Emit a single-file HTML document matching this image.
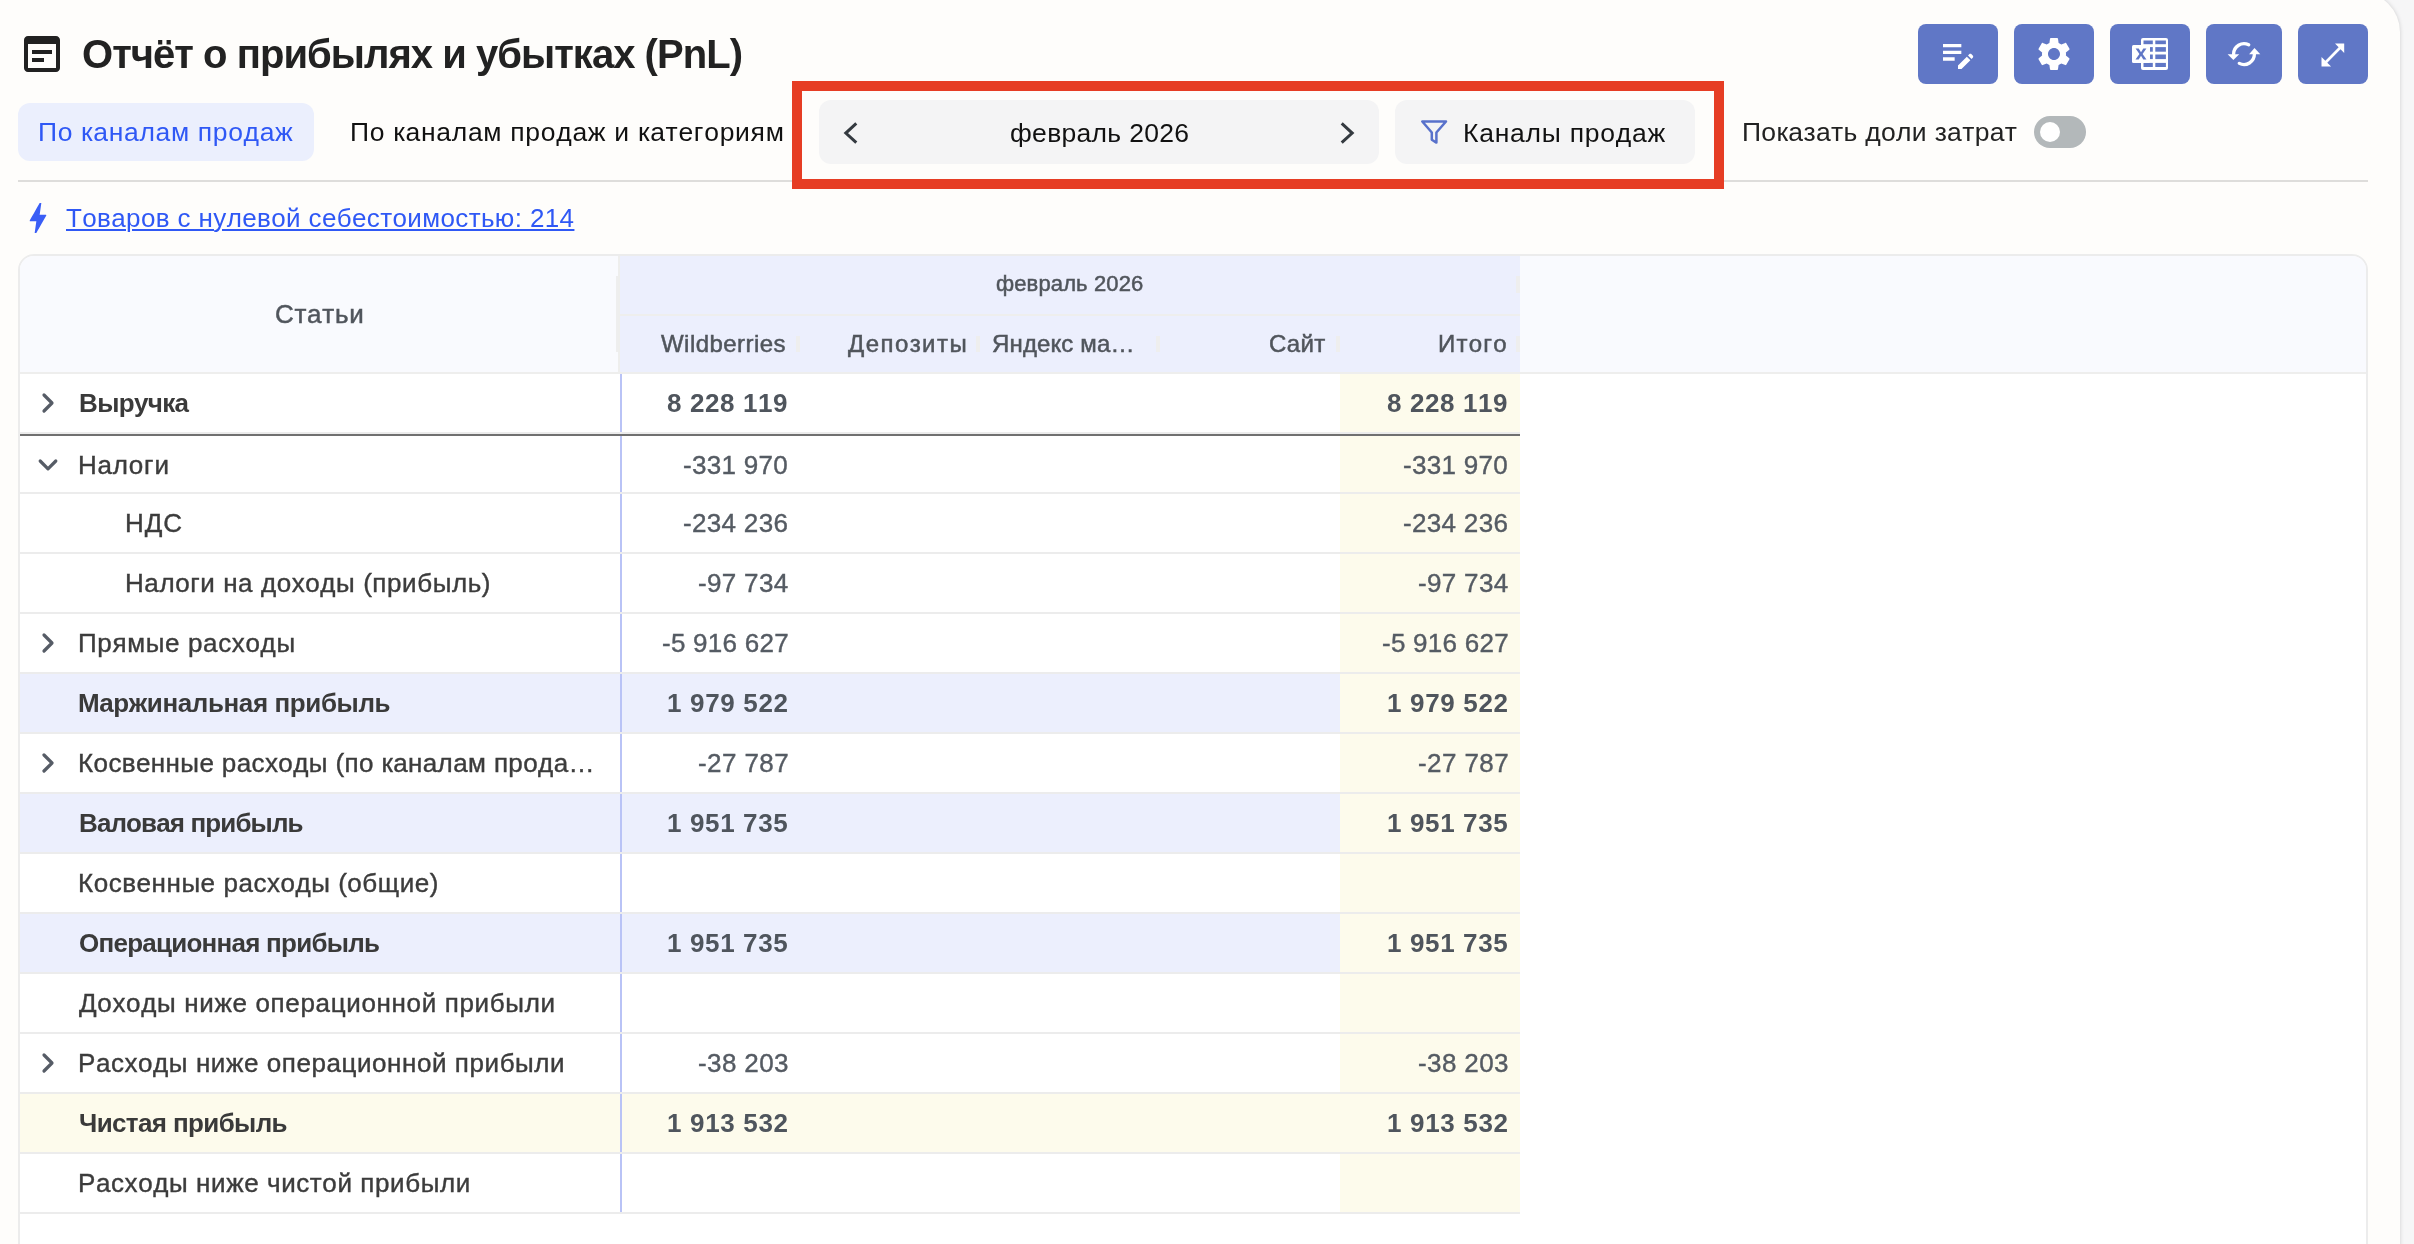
<!DOCTYPE html>
<html lang="ru"><head><meta charset="utf-8"><title>PnL</title>
<style>
html,body{margin:0;padding:0;}
body{width:2414px;height:1244px;overflow:hidden;background:#f6f6f7;font-family:"Liberation Sans", sans-serif;position:relative;}
.b{position:absolute;display:block;}
.t{position:absolute;white-space:nowrap;font-family:"Liberation Sans", sans-serif;will-change:transform;font-kerning:none;font-variant-ligatures:none;}
</style></head><body>
<div class="b" style="left:-40px;top:-8px;width:2440px;height:1400px;background:#fefdfb;border-radius:40px;box-shadow:0 0 4px rgba(0,0,0,0.17);"></div>
<svg class="b" style="left:18px;top:30px" width="48" height="48" viewBox="0 0 24 24"><path fill="#212121" d="M19 3H5c-1.11 0-2 .9-2 2v14c0 1.1.89 2 2 2h14c1.1 0 2-.9 2-2V5c0-1.1-.9-2-2-2zm0 16H5V7h14v12zm-2-7H7v-2h10v2zm-4 4H7v-2h6v2z"/></svg>
<span class="t" style="left:82.06px;top:31.79px;font-size:40px;line-height:44.688px;color:#222;letter-spacing:-0.963px;font-weight:700;">Отчёт о прибылях и убытках (PnL)</span>
<div class="b" style="left:1918px;top:24px;width:80px;height:60px;background:#6077c6;border-radius:8px;"></div>
<div class="b" style="left:2014px;top:24px;width:80px;height:60px;background:#6077c6;border-radius:8px;"></div>
<div class="b" style="left:2110px;top:24px;width:80px;height:60px;background:#6077c6;border-radius:8px;"></div>
<div class="b" style="left:2206px;top:24px;width:76px;height:60px;background:#6077c6;border-radius:8px;"></div>
<div class="b" style="left:2298px;top:24px;width:70px;height:60px;background:#6077c6;border-radius:8px;"></div>
<svg class="b" style="left:1938px;top:34px" width="40" height="40" viewBox="0 0 24 24"><path fill="#fff" d="M3 10h11v2H3v-2zm0-2h11V6H3v2zm0 8h7v-2H3v2zm15.01-3.13.71-.71c.39-.39 1.02-.39 1.41 0l.71.71c.39.39.39 1.02 0 1.41l-.71.71-2.12-2.12zm-.71.71-5.3 5.3V21h2.12l5.3-5.3-2.12-2.12z"/></svg>
<svg class="b" style="left:2034px;top:34px" width="40" height="40" viewBox="0 0 24 24"><path fill="#fff" d="M19.14 12.94c.04-.3.06-.61.06-.94 0-.32-.02-.64-.07-.94l2.03-1.58c.18-.14.23-.41.12-.61l-1.92-3.32c-.12-.22-.37-.29-.59-.22l-2.39.96c-.5-.38-1.03-.7-1.62-.94l-.36-2.54c-.04-.24-.24-.41-.48-.41h-3.84c-.24 0-.43.17-.47.41l-.36 2.54c-.59.24-1.13.57-1.62.94l-2.39-.96c-.22-.08-.47 0-.59.22L2.74 8.87c-.12.21-.08.47.12.61l2.03 1.58c-.05.3-.09.63-.09.94s.02.64.07.94l-2.03 1.58c-.18.14-.23.41-.12.61l1.92 3.32c.12.22.37.29.59.22l2.39-.96c.5.38 1.03.7 1.62.94l.36 2.54c.05.24.24.41.48.41h3.84c.24 0 .44-.17.47-.41l.36-2.54c.59-.24 1.13-.56 1.62-.94l2.39.96c.22.08.47 0 .59-.22l1.92-3.32c.12-.22.07-.47-.12-.61l-2.01-1.58zM12 15.6c-1.98 0-3.600-1.62-3.600-3.600s1.620-3.600 3.600-3.600 3.600 1.620 3.600 3.600-1.620 3.600-3.600 3.600z"/></svg>
<svg class="b" style="left:2132px;top:38px" width="36" height="32" viewBox="0 0 36 32">
<rect x="9" y="0" width="27" height="32" rx="2" fill="#fff"/>
<g fill="#6077c6"><rect x="11.500" y="2.500" width="9.300" height="3.700"/><rect x="23.300" y="2.500" width="10.600" height="3.700"/>
<rect x="23.300" y="9.100" width="10.600" height="4.600"/><rect x="23.300" y="16.500" width="10.600" height="4.600"/>
<rect x="18" y="9.100" width="2.800" height="4.600"/><rect x="18" y="16.500" width="2.800" height="4.600"/>
<rect x="11.500" y="24.900" width="9.300" height="4.100"/><rect x="23.300" y="24.900" width="10.600" height="4.100"/></g>
<rect x="0" y="7" width="18" height="18" rx="1.500" fill="#fff"/>
<path fill="#6077c6" d="M3.600 10.500h3.100l2.300 3.700 2.300-3.700h3.100l-3.800 5.500 3.900 5.500h-3.200l-2.300-3.700-2.300 3.700h-3.200l3.900-5.500z"/>
</svg>
<svg class="b" style="left:2220px;top:36px" width="48" height="36" viewBox="0 0 48 36">
<g fill="none" stroke="#fff" stroke-width="3.300" stroke-linecap="round"><path d="M13.600 18.100 A10.400 10.400 0 0 1 28.720 8.830"/><path d="M34.400 18.100 A10.400 10.400 0 0 1 19.280 27.370"/></g>
<path fill="#fff" d="M7.600 18.300h11.600l-5.800 5.700z"/><path fill="#fff" d="M29.100 18.200h11.200l-5.800-6.200z"/>
</svg>
<svg class="b" style="left:2321px;top:43px" width="24" height="24" viewBox="0 0 24 24">
<path fill="#fff" d="M23.200 0.400H14L17.650 4.250L4.350 17.750L0.500 13.900V23.500H10.100L6.250 19.650L19.550 6.150L23.200 10Z"/>
</svg>
<div class="b" style="left:18px;top:103px;width:296px;height:58px;background:#ebeffd;border-radius:12px;"></div>
<span class="t" style="left:37.75px;top:117.61px;font-size:26.5px;line-height:29.605px;color:#2f58f5;letter-spacing:0.647px;">По каналам продаж</span>
<span class="t" style="left:349.55px;top:117.61px;font-size:26.5px;line-height:29.605px;color:#111;letter-spacing:0.698px;">По каналам продаж и категориям</span>
<div class="b" style="left:18px;top:180px;width:2350px;height:2px;background:#dedddb;"></div>
<div class="b" style="left:792px;top:81px;width:932px;height:108px;background:transparent;box-sizing:border-box;border:10px solid #e63d24;"></div>
<div class="b" style="left:819px;top:100px;width:560px;height:64px;background:#f4f4f5;border-radius:12px;"></div>
<svg class="b" style="left:840px;top:118px" width="24" height="30" viewBox="0 0 24 30"><path d="M16.300 5.400 L5.800 15.050 L16.300 24.700" fill="none" stroke="#343a40" stroke-width="3"/></svg>
<svg class="b" style="left:1334px;top:118px" width="24" height="30" viewBox="0 0 24 30"><path d="M7.700 5.400 L18.200 15.050 L7.700 24.700" fill="none" stroke="#343a40" stroke-width="3"/></svg>
<span class="t" style="left:1009.89px;top:118.61px;font-size:26.5px;line-height:29.605px;color:#111;letter-spacing:0.300px;">февраль 2026</span>
<div class="b" style="left:1395px;top:100px;width:300px;height:64px;background:#f4f4f5;border-radius:12px;"></div>
<svg class="b" style="left:1410px;top:108px" width="50" height="50" viewBox="0 0 50 50"><path d="M12.300 13.500 H36 L26.400 24.500 V34.600 L21.800 31.800 V24.500 Z" fill="none" stroke="#5871cb" stroke-width="2.500" stroke-linejoin="round"/></svg>
<span class="t" style="left:1463.13px;top:118.51px;font-size:26.5px;line-height:29.605px;color:#111;letter-spacing:0.758px;">Каналы продаж</span>
<span class="t" style="left:1741.85px;top:117.51px;font-size:26.5px;line-height:29.605px;color:#222;letter-spacing:0.322px;">Показать доли затрат</span>
<div class="b" style="left:2034px;top:116px;width:52px;height:32px;background:#b3b8ba;border-radius:16px;"></div>
<div class="b" style="left:2040px;top:122px;width:20px;height:20px;background:#fff;border-radius:10px;"></div>
<svg class="b" style="left:18px;top:198px" width="40" height="40" viewBox="0 0 24 24"><path fill="#3a5ef6" d="M11 21h-1l1-7H7.500c-.58 0-.57-.32-.38-.66.190-.34.050-.08.070-.12C8.480 10.940 10.420 7.540 13 3h1l-1 7h3.500c.49 0 .56.330.47.510l-.07.150C12.960 17.550 11 21 11 21z"/></svg>
<span class="t" style="left:65.72px;top:203.66px;font-size:26px;line-height:29.047px;color:#2f58f5;letter-spacing:0.373px;text-decoration:underline;text-decoration-thickness:2px;text-underline-offset:2px;text-decoration-skip-ink:auto;">Товаров с нулевой себестоимостью: 214</span>
<div class="b" style="left:18px;top:254px;width:2350px;height:1100px;box-sizing:border-box;border:2px solid #ececec;border-radius:16px;background:#fff;overflow:hidden"></div>
<div class="b" style="left:20px;top:256px;width:2346px;height:116px;background:#f9fafe;border-radius:14px 14px 0 0;"></div>
<div class="b" style="left:618px;top:256px;width:2px;height:116px;background:#eeeeed;"></div>
<div class="b" style="left:620px;top:256px;width:900px;height:116px;background:#eceffd;"></div>
<div class="b" style="left:620px;top:314px;width:900px;height:2px;background:#eeeeed;"></div>
<div class="b" style="left:20px;top:372px;width:2346px;height:2px;background:#eeeeed;"></div>
<div class="b" style="left:616px;top:276px;width:2px;height:76px;background:#eeeeee;"></div>
<div class="b" style="left:1516px;top:276px;width:4px;height:17px;background:#eeeeee;"></div>
<div class="b" style="left:796px;top:336px;width:4px;height:16px;background:#eeeeee;"></div>
<div class="b" style="left:976px;top:336px;width:4px;height:16px;background:#eeeeee;"></div>
<div class="b" style="left:1156px;top:336px;width:4px;height:16px;background:#eeeeee;"></div>
<div class="b" style="left:1336px;top:336px;width:4px;height:16px;background:#eeeeee;"></div>
<div class="b" style="left:1516px;top:336px;width:4px;height:16px;background:#eeeeee;"></div>
<span class="t" style="left:275.08px;top:299.66px;font-size:26px;line-height:29.047px;color:#50555c;letter-spacing:0.720px;-webkit-text-stroke:0.5px #50555c;">Статьи</span>
<span class="t" style="left:995.88px;top:271.58px;font-size:22px;line-height:24.578px;color:#50555c;letter-spacing:0.131px;-webkit-text-stroke:0.5px #50555c;">февраль 2026</span>
<span class="t" style="left:661.29px;top:330.67px;font-size:24px;line-height:26.812px;color:#50555c;letter-spacing:0.455px;-webkit-text-stroke:0.5px #50555c;">Wildberries</span>
<span class="t" style="left:847.52px;top:330.67px;font-size:24px;line-height:26.812px;color:#50555c;letter-spacing:1.435px;-webkit-text-stroke:0.5px #50555c;">Депозиты</span>
<span class="t" style="left:992.38px;top:330.67px;font-size:24px;line-height:26.812px;color:#50555c;letter-spacing:0.159px;-webkit-text-stroke:0.5px #50555c;">Яндекс ма…</span>
<span class="t" style="left:1269.08px;top:330.67px;font-size:24px;line-height:26.812px;color:#50555c;letter-spacing:0.417px;-webkit-text-stroke:0.5px #50555c;">Сайт</span>
<span class="t" style="left:1437.73px;top:330.67px;font-size:24px;line-height:26.812px;color:#50555c;letter-spacing:1.196px;-webkit-text-stroke:0.5px #50555c;">Итого</span>
<div class="b" style="left:1340px;top:374px;width:180px;height:58px;background:#fdfbec;"></div>
<div class="b" style="left:620px;top:374px;width:2px;height:58px;background:#b9c3f6;"></div>
<div class="b" style="left:20px;top:432px;width:1500px;height:2px;background:#ececec;"></div>
<span class="t" style="left:78.56px;top:388.96px;font-size:26px;line-height:29.047px;color:#3a3a3a;letter-spacing:-0.636px;font-weight:700;">Выручка</span>
<svg class="b" style="left:36px;top:388px" width="24" height="30" viewBox="0 0 24 30"><path d="M8 7 L16 15 L8 23" fill="none" stroke="#565c66" stroke-width="3.200" stroke-linecap="round" stroke-linejoin="round"/></svg>
<span class="t" style="left:667.47px;top:388.96px;font-size:26px;line-height:29.047px;color:#4f555d;letter-spacing:0.603px;font-weight:700;">8 228 119</span>
<span class="t" style="left:1387.47px;top:388.96px;font-size:26px;line-height:29.047px;color:#4f555d;letter-spacing:0.603px;font-weight:700;">8 228 119</span>
<div class="b" style="left:1340px;top:434px;width:180px;height:58px;background:#fdfbec;"></div>
<div class="b" style="left:620px;top:434px;width:2px;height:58px;background:#b9c3f6;"></div>
<div class="b" style="left:20px;top:492px;width:1500px;height:2px;background:#ececec;"></div>
<span class="t" style="left:78.37px;top:450.96px;font-size:26px;line-height:29.047px;color:#3c3c3c;letter-spacing:0.812px;-webkit-text-stroke:0.4px #3c3c3c;">Налоги</span>
<svg class="b" style="left:33px;top:451px" width="30" height="24" viewBox="0 0 30 24"><path d="M7.200 10 L15 17.800 L22.800 10" fill="none" stroke="#565c66" stroke-width="3.200" stroke-linecap="round" stroke-linejoin="round"/></svg>
<span class="t" style="left:683.24px;top:450.96px;font-size:26px;line-height:29.047px;color:#555b63;letter-spacing:0.304px;-webkit-text-stroke:0.4px #555b63;">-331 970</span>
<span class="t" style="left:1403.24px;top:450.96px;font-size:26px;line-height:29.047px;color:#555b63;letter-spacing:0.304px;-webkit-text-stroke:0.4px #555b63;">-331 970</span>
<div class="b" style="left:1340px;top:494px;width:180px;height:58px;background:#fdfbec;"></div>
<div class="b" style="left:620px;top:494px;width:2px;height:58px;background:#b9c3f6;"></div>
<div class="b" style="left:20px;top:552px;width:1500px;height:2px;background:#ececec;"></div>
<span class="t" style="left:124.77px;top:508.96px;font-size:26px;line-height:29.047px;color:#3c3c3c;letter-spacing:0.931px;-webkit-text-stroke:0.4px #3c3c3c;">НДС</span>
<span class="t" style="left:683.24px;top:508.96px;font-size:26px;line-height:29.047px;color:#555b63;letter-spacing:0.322px;-webkit-text-stroke:0.4px #555b63;">-234 236</span>
<span class="t" style="left:1403.24px;top:508.96px;font-size:26px;line-height:29.047px;color:#555b63;letter-spacing:0.322px;-webkit-text-stroke:0.4px #555b63;">-234 236</span>
<div class="b" style="left:1340px;top:554px;width:180px;height:58px;background:#fdfbec;"></div>
<div class="b" style="left:620px;top:554px;width:2px;height:58px;background:#b9c3f6;"></div>
<div class="b" style="left:20px;top:612px;width:1500px;height:2px;background:#ececec;"></div>
<span class="t" style="left:124.77px;top:568.96px;font-size:26px;line-height:29.047px;color:#3c3c3c;letter-spacing:0.578px;-webkit-text-stroke:0.4px #3c3c3c;">Налоги на доходы (прибыль)</span>
<span class="t" style="left:697.64px;top:568.96px;font-size:26px;line-height:29.047px;color:#555b63;letter-spacing:0.323px;-webkit-text-stroke:0.4px #555b63;">-97 734</span>
<span class="t" style="left:1417.64px;top:568.96px;font-size:26px;line-height:29.047px;color:#555b63;letter-spacing:0.323px;-webkit-text-stroke:0.4px #555b63;">-97 734</span>
<div class="b" style="left:1340px;top:614px;width:180px;height:58px;background:#fdfbec;"></div>
<div class="b" style="left:620px;top:614px;width:2px;height:58px;background:#b9c3f6;"></div>
<div class="b" style="left:20px;top:672px;width:1500px;height:2px;background:#ececec;"></div>
<span class="t" style="left:78.09px;top:628.96px;font-size:26px;line-height:29.047px;color:#3c3c3c;letter-spacing:0.646px;-webkit-text-stroke:0.4px #3c3c3c;">Прямые расходы</span>
<svg class="b" style="left:36px;top:628px" width="24" height="30" viewBox="0 0 24 30"><path d="M8 7 L16 15 L8 23" fill="none" stroke="#565c66" stroke-width="3.200" stroke-linecap="round" stroke-linejoin="round"/></svg>
<span class="t" style="left:661.64px;top:628.96px;font-size:26px;line-height:29.047px;color:#555b63;letter-spacing:0.260px;-webkit-text-stroke:0.4px #555b63;">-5 916 627</span>
<span class="t" style="left:1381.64px;top:628.96px;font-size:26px;line-height:29.047px;color:#555b63;letter-spacing:0.260px;-webkit-text-stroke:0.4px #555b63;">-5 916 627</span>
<div class="b" style="left:20px;top:674px;width:1500px;height:58px;background:#eceffd;"></div>
<div class="b" style="left:1340px;top:674px;width:180px;height:58px;background:#fdfbec;"></div>
<div class="b" style="left:620px;top:674px;width:2px;height:58px;background:#b9c3f6;"></div>
<div class="b" style="left:20px;top:732px;width:1500px;height:2px;background:#ececec;"></div>
<span class="t" style="left:78.46px;top:688.96px;font-size:26px;line-height:29.047px;color:#3a3a3a;letter-spacing:-0.392px;font-weight:700;">Маржинальная прибыль</span>
<span class="t" style="left:666.96px;top:688.96px;font-size:26px;line-height:29.047px;color:#4f555d;letter-spacing:0.676px;font-weight:700;">1 979 522</span>
<span class="t" style="left:1386.96px;top:688.96px;font-size:26px;line-height:29.047px;color:#4f555d;letter-spacing:0.676px;font-weight:700;">1 979 522</span>
<div class="b" style="left:1340px;top:734px;width:180px;height:58px;background:#fdfbec;"></div>
<div class="b" style="left:620px;top:734px;width:2px;height:58px;background:#b9c3f6;"></div>
<div class="b" style="left:20px;top:792px;width:1500px;height:2px;background:#ececec;"></div>
<span class="t" style="left:78.27px;top:748.96px;font-size:26px;line-height:29.047px;color:#3c3c3c;letter-spacing:0.389px;-webkit-text-stroke:0.4px #3c3c3c;">Косвенные расходы (по каналам прода…</span>
<svg class="b" style="left:36px;top:748px" width="24" height="30" viewBox="0 0 24 30"><path d="M8 7 L16 15 L8 23" fill="none" stroke="#565c66" stroke-width="3.200" stroke-linecap="round" stroke-linejoin="round"/></svg>
<span class="t" style="left:697.64px;top:748.96px;font-size:26px;line-height:29.047px;color:#555b63;letter-spacing:0.414px;-webkit-text-stroke:0.4px #555b63;">-27 787</span>
<span class="t" style="left:1417.64px;top:748.96px;font-size:26px;line-height:29.047px;color:#555b63;letter-spacing:0.414px;-webkit-text-stroke:0.4px #555b63;">-27 787</span>
<div class="b" style="left:20px;top:794px;width:1500px;height:58px;background:#eceffd;"></div>
<div class="b" style="left:1340px;top:794px;width:180px;height:58px;background:#fdfbec;"></div>
<div class="b" style="left:620px;top:794px;width:2px;height:58px;background:#b9c3f6;"></div>
<div class="b" style="left:20px;top:852px;width:1500px;height:2px;background:#ececec;"></div>
<span class="t" style="left:78.66px;top:808.96px;font-size:26px;line-height:29.047px;color:#3a3a3a;letter-spacing:-0.878px;font-weight:700;">Валовая прибыль</span>
<span class="t" style="left:666.96px;top:808.96px;font-size:26px;line-height:29.047px;color:#4f555d;letter-spacing:0.637px;font-weight:700;">1 951 735</span>
<span class="t" style="left:1386.96px;top:808.96px;font-size:26px;line-height:29.047px;color:#4f555d;letter-spacing:0.637px;font-weight:700;">1 951 735</span>
<div class="b" style="left:1340px;top:854px;width:180px;height:58px;background:#fdfbec;"></div>
<div class="b" style="left:620px;top:854px;width:2px;height:58px;background:#b9c3f6;"></div>
<div class="b" style="left:20px;top:912px;width:1500px;height:2px;background:#ececec;"></div>
<span class="t" style="left:78.27px;top:868.96px;font-size:26px;line-height:29.047px;color:#3c3c3c;letter-spacing:0.541px;-webkit-text-stroke:0.4px #3c3c3c;">Косвенные расходы (общие)</span>
<div class="b" style="left:20px;top:914px;width:1500px;height:58px;background:#eceffd;"></div>
<div class="b" style="left:1340px;top:914px;width:180px;height:58px;background:#fdfbec;"></div>
<div class="b" style="left:620px;top:914px;width:2px;height:58px;background:#b9c3f6;"></div>
<div class="b" style="left:20px;top:972px;width:1500px;height:2px;background:#ececec;"></div>
<span class="t" style="left:79.33px;top:928.96px;font-size:26px;line-height:29.047px;color:#3a3a3a;letter-spacing:-0.749px;font-weight:700;">Операционная прибыль</span>
<span class="t" style="left:666.96px;top:928.96px;font-size:26px;line-height:29.047px;color:#4f555d;letter-spacing:0.637px;font-weight:700;">1 951 735</span>
<span class="t" style="left:1386.96px;top:928.96px;font-size:26px;line-height:29.047px;color:#4f555d;letter-spacing:0.637px;font-weight:700;">1 951 735</span>
<div class="b" style="left:1340px;top:974px;width:180px;height:58px;background:#fdfbec;"></div>
<div class="b" style="left:620px;top:974px;width:2px;height:58px;background:#b9c3f6;"></div>
<div class="b" style="left:20px;top:1032px;width:1500px;height:2px;background:#ececec;"></div>
<span class="t" style="left:79.01px;top:988.96px;font-size:26px;line-height:29.047px;color:#3c3c3c;letter-spacing:0.657px;-webkit-text-stroke:0.4px #3c3c3c;">Доходы ниже операционной прибыли</span>
<div class="b" style="left:1340px;top:1034px;width:180px;height:58px;background:#fdfbec;"></div>
<div class="b" style="left:620px;top:1034px;width:2px;height:58px;background:#b9c3f6;"></div>
<div class="b" style="left:20px;top:1092px;width:1500px;height:2px;background:#ececec;"></div>
<span class="t" style="left:78.27px;top:1048.96px;font-size:26px;line-height:29.047px;color:#3c3c3c;letter-spacing:0.571px;-webkit-text-stroke:0.4px #3c3c3c;">Расходы ниже операционной прибыли</span>
<svg class="b" style="left:36px;top:1048px" width="24" height="30" viewBox="0 0 24 30"><path d="M8 7 L16 15 L8 23" fill="none" stroke="#565c66" stroke-width="3.200" stroke-linecap="round" stroke-linejoin="round"/></svg>
<span class="t" style="left:697.64px;top:1048.96px;font-size:26px;line-height:29.047px;color:#555b63;letter-spacing:0.386px;-webkit-text-stroke:0.4px #555b63;">-38 203</span>
<span class="t" style="left:1417.64px;top:1048.96px;font-size:26px;line-height:29.047px;color:#555b63;letter-spacing:0.386px;-webkit-text-stroke:0.4px #555b63;">-38 203</span>
<div class="b" style="left:20px;top:1094px;width:1500px;height:58px;background:#fdfbec;"></div>
<div class="b" style="left:1340px;top:1094px;width:180px;height:58px;background:#fdfbec;"></div>
<div class="b" style="left:620px;top:1094px;width:2px;height:58px;background:#b9c3f6;"></div>
<div class="b" style="left:20px;top:1152px;width:1500px;height:2px;background:#ececec;"></div>
<span class="t" style="left:79.00px;top:1108.96px;font-size:26px;line-height:29.047px;color:#3a3a3a;letter-spacing:-0.620px;font-weight:700;">Чистая прибыль</span>
<span class="t" style="left:666.96px;top:1108.96px;font-size:26px;line-height:29.047px;color:#4f555d;letter-spacing:0.676px;font-weight:700;">1 913 532</span>
<span class="t" style="left:1386.96px;top:1108.96px;font-size:26px;line-height:29.047px;color:#4f555d;letter-spacing:0.676px;font-weight:700;">1 913 532</span>
<div class="b" style="left:1340px;top:1154px;width:180px;height:58px;background:#fdfbec;"></div>
<div class="b" style="left:620px;top:1154px;width:2px;height:58px;background:#b9c3f6;"></div>
<div class="b" style="left:20px;top:1212px;width:1500px;height:2px;background:#ececec;"></div>
<span class="t" style="left:78.27px;top:1168.96px;font-size:26px;line-height:29.047px;color:#3c3c3c;letter-spacing:0.593px;-webkit-text-stroke:0.4px #3c3c3c;">Расходы ниже чистой прибыли</span>
<div class="b" style="left:20px;top:434px;width:1500px;height:2px;background:#707070;"></div>
</body></html>
